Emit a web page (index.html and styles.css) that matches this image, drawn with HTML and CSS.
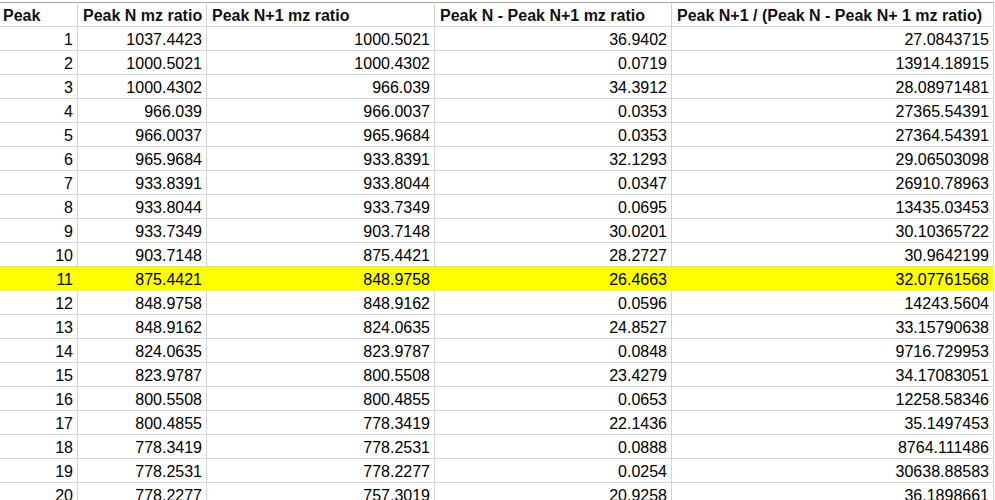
FILE: index.html
```html
<!DOCTYPE html>
<html lang="en">
<head>
    <meta charset="UTF-8">
    <title>Peaks</title>
    <link rel="stylesheet" href="styles.css">
</head>
<body>

<table class="sheet">
    <colgroup>
        <col class="col-peak">
        <col class="col-n">
        <col class="col-n1">
        <col class="col-diff">
        <col class="col-ratio">
    </colgroup>
    <thead>
        <tr>
            <th>Peak</th>
            <th>Peak N mz ratio</th>
            <th>Peak N+1 mz ratio</th>
            <th>Peak N - Peak N+1 mz ratio</th>
            <th>Peak N+1 / (Peak N - Peak N+ 1 mz ratio)</th>
        </tr>
    </thead>
    <tbody>
        <tr><td>1</td><td>1037.4423</td><td>1000.5021</td><td>36.9402</td><td>27.0843715</td></tr>
        <tr><td>2</td><td>1000.5021</td><td>1000.4302</td><td>0.0719</td><td>13914.18915</td></tr>
        <tr><td>3</td><td>1000.4302</td><td>966.039</td><td>34.3912</td><td>28.08971481</td></tr>
        <tr><td>4</td><td>966.039</td><td>966.0037</td><td>0.0353</td><td>27365.54391</td></tr>
        <tr><td>5</td><td>966.0037</td><td>965.9684</td><td>0.0353</td><td>27364.54391</td></tr>
        <tr><td>6</td><td>965.9684</td><td>933.8391</td><td>32.1293</td><td>29.06503098</td></tr>
        <tr><td>7</td><td>933.8391</td><td>933.8044</td><td>0.0347</td><td>26910.78963</td></tr>
        <tr><td>8</td><td>933.8044</td><td>933.7349</td><td>0.0695</td><td>13435.03453</td></tr>
        <tr><td>9</td><td>933.7349</td><td>903.7148</td><td>30.0201</td><td>30.10365722</td></tr>
        <tr><td>10</td><td>903.7148</td><td>875.4421</td><td>28.2727</td><td>30.9642199</td></tr>
        <tr class="marked"><td>11</td><td>875.4421</td><td>848.9758</td><td>26.4663</td><td>32.07761568</td></tr>
        <tr><td>12</td><td>848.9758</td><td>848.9162</td><td>0.0596</td><td>14243.5604</td></tr>
        <tr><td>13</td><td>848.9162</td><td>824.0635</td><td>24.8527</td><td>33.15790638</td></tr>
        <tr><td>14</td><td>824.0635</td><td>823.9787</td><td>0.0848</td><td>9716.729953</td></tr>
        <tr><td>15</td><td>823.9787</td><td>800.5508</td><td>23.4279</td><td>34.17083051</td></tr>
        <tr><td>16</td><td>800.5508</td><td>800.4855</td><td>0.0653</td><td>12258.58346</td></tr>
        <tr><td>17</td><td>800.4855</td><td>778.3419</td><td>22.1436</td><td>35.1497453</td></tr>
        <tr><td>18</td><td>778.3419</td><td>778.2531</td><td>0.0888</td><td>8764.111486</td></tr>
        <tr><td>19</td><td>778.2531</td><td>778.2277</td><td>0.0254</td><td>30638.88583</td></tr>
        <tr><td>20</td><td>778.2277</td><td>757.3019</td><td>20.9258</td><td>36.1898661</td></tr>
    </tbody>
</table>

</body>
</html>
```

FILE: styles.css
```css
html, body {
    margin: 0;
    padding: 0;
    background-color: #ffffff;
}

body {
    overflow: hidden;
    font-family: 'Liberation Sans', Arial, sans-serif;
    color: #000000;
}

.sheet {
    margin-top: 2px;
    border-collapse: separate;
    border-spacing: 0;
    table-layout: fixed;
    width: 994px;
}

.col-peak  { width: 78px; }
.col-n     { width: 129px; }
.col-n1    { width: 228px; }
.col-diff  { width: 237px; }
.col-ratio { width: 322px; }

.sheet th,
.sheet td {
    box-sizing: content-box;
    height: 20px;
    padding: 3px 4px 0 4px;
    line-height: 20px;
    border-right: 1px solid #d4d4d4;
    border-bottom: 1px solid #d4d4d4;
    white-space: nowrap;
    overflow: hidden;
}

.sheet th {
    border-top: 1px solid #a6a6a6;
    text-align: left;
    font-size: 16px;
    font-weight: bold;
    color: #111111;
    padding-left: 3px;
}

.sheet th + th {
    padding-left: 5px;
}

.sheet td {
    text-align: right;
    font-size: 16px;
}

.sheet tr.marked td {
    background-color: #ffff00;
    border-right-color: #ffff00;
    border-bottom-color: #ffff00;
}
```
